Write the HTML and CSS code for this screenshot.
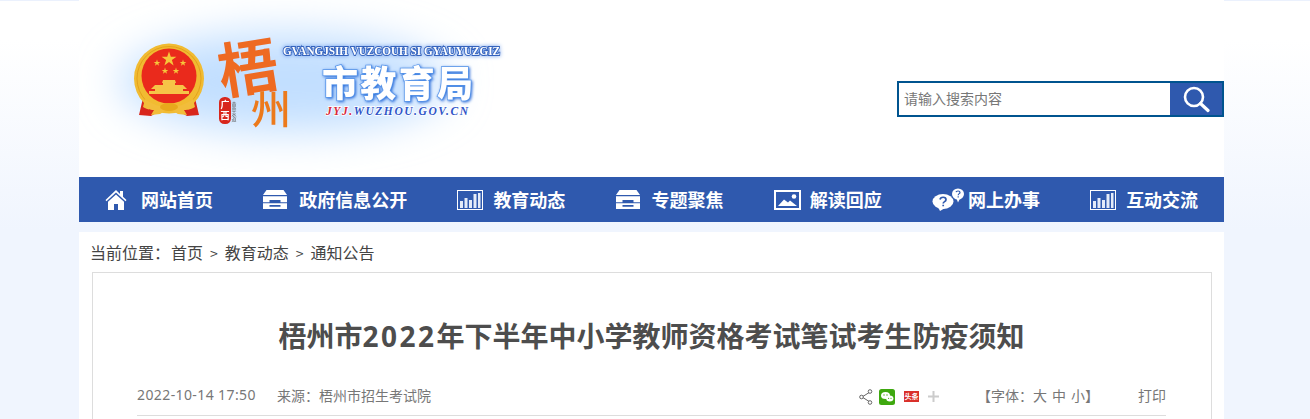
FILE: index.html
```html
<!DOCTYPE html>
<html lang="zh-CN">
<head>
<meta charset="utf-8">
<title>梧州市2022年下半年中小学教师资格考试笔试考生防疫须知</title>
<link rel="stylesheet" href="styles.css">
</head>
<body>
<div class="page">
  <header class="header">
    <svg class="logo" width="470" height="177" viewBox="0 0 470 177" aria-label="梧州市教育局">
      <defs>
        <filter id="soft" x="-20%" y="-20%" width="140%" height="140%"><feGaussianBlur stdDeviation="0.35"/></filter>
        <filter id="halo" x="-30%" y="-60%" width="160%" height="220%"><feGaussianBlur stdDeviation="21"/></filter>
      </defs>
      <ellipse cx="205" cy="82" rx="165" ry="50" fill="#c2dfff" filter="url(#halo)"/>
      <g filter="url(#soft)">
        <path d="M64 98L60 115L72 116L86 108Z M116 98L120 115L108 116L94 108Z" fill="#d8261c"/>
        <circle cx="90" cy="78.500" r="35" fill="#f1bb30"/>
        <circle cx="90" cy="78.500" r="32" fill="none" stroke="#e3a21e" stroke-width="1"/>
        <circle cx="90" cy="76" r="27.500" fill="#ea2a1e"/>
        <path d="M90 51.500l1.800 5.300h5.600l-4.500 3.300 1.700 5.300-4.600-3.300-4.600 3.300 1.700-5.300-4.500-3.300h5.600z" fill="#f6c63a"/>
        <path d="M78 59.500l.8 2.400h2.500l-2 1.500.8 2.400-2.100-1.500-2.100 1.500.8-2.400-2-1.500h2.500z" fill="#f6c63a"/>
        <path d="M104 59.500l.8 2.400h2.500l-2 1.500.8 2.400-2.100-1.500-2.100 1.500.8-2.400-2-1.500h2.500z" fill="#f6c63a"/>
        <path d="M86 67.500l.8 2.400h2.500l-2 1.500.8 2.400-2.100-1.500-2.100 1.500.8-2.400-2-1.500h2.500z" fill="#f6c63a"/>
        <path d="M97 67.500l.8 2.400h2.500l-2 1.500.8 2.400-2.100-1.500-2.100 1.500.8-2.400-2-1.500h2.500z" fill="#f6c63a"/>
        <path d="M84 80h12l1 3h-1v2h8l4 4h-4v2h6v3H70v-3h6v-2h-4l4-4h8v-2h-1z" fill="#f6c447"/>
        <path d="M66 99c7 5 15 8 24 8s17-3 24-8l2 8c-5 3-9 3-11 3l3 5-9-1-9-5-9 5-9 1 3-5c-2 0-6 0-11-3z" fill="#f2bd3a"/>
        <ellipse cx="90" cy="107" rx="9" ry="4" fill="#e8a91f"/>
      </g>
      <g filter="url(#soft)">
        <text class="wu" x="139" y="90" transform="rotate(-9 170 67)">梧</text>
        <text class="zhou" x="172" y="124">州</text>
        <rect x="140" y="97" width="12" height="27" rx="5.500" fill="#d8261c"/>
        <text class="seal" x="141.500" y="108">广</text>
        <text class="seal" x="141.500" y="119">西</text>
        <text class="vert" x="155" y="102">黄金水道</text>
      </g>
      <text class="en" x="204" y="55" textLength="217" lengthAdjust="spacingAndGlyphs">GVANGJSIH VUZCOUH SI GYAUYUZGIZ</text>
      <text class="cn" x="243" y="97" textLength="151">市教育局</text>
      <text class="url" x="247" y="115" textLength="142"><tspan class="url-red">JYJ.</tspan>WUZHOU.GOV.CN</text>
    </svg>
    <form class="search">
      <span class="search-input">请输入搜索内容</span>
      <span class="search-btn">
        <svg width="28" height="28" viewBox="0 0 28 28"><circle cx="12" cy="12" r="9" fill="none" stroke="#fff" stroke-width="2.600"/><path d="M18.500 18.500L26 25.500" stroke="#fff" stroke-width="3.200" stroke-linecap="round"/></svg>
      </span>
    </form>
  </header>

  <nav class="nav">
    <a class="nav-item"><span class="ico"><svg width="22" height="22" viewBox="0 0 22 22"><path d="M11 1L.5 11l1 1.200L11 3.500l9.500 8.700 1-1.200L18 7.700V2h-3v3z" fill="#fff"/><path d="M11 5.500L3 12.800V21h6v-6h4v6h6v-8.200z" fill="#fff"/></svg></span>网站首页</a>
    <a class="nav-item"><span class="ico"><svg width="24" height="19" viewBox="0 0 24 19" preserveAspectRatio="none"><path d="M3.500 0h17L24 5H0z" fill="#fff"/><path d="M0 6.200h24v6h-6.500v-2.200h-11v2.200H0z" fill="#fff"/><path d="M0 13.200h24V19H0zM6.500 15V16.800h11V15z" fill="#fff" fill-rule="evenodd"/></svg></span>政府信息公开</a>
    <a class="nav-item"><span class="ico"><svg width="26" height="20" viewBox="0 0 26 20"><rect x=".5" y=".5" width="25" height="19" fill="none" stroke="#fff"/><path d="M3 11h3v7H3zM7.500 8h3v10h-3zM12 10h3v8h-3zM16.500 4h3v14h-3zM21 3h2.500v15H21z" fill="#e4ebf8"/></svg></span>教育动态</a>
    <a class="nav-item"><span class="ico"><svg width="24" height="19" viewBox="0 0 24 19" preserveAspectRatio="none"><path d="M3.500 0h17L24 5H0z" fill="#fff"/><path d="M0 6.200h24v6h-6.500v-2.200h-11v2.200H0z" fill="#fff"/><path d="M0 13.200h24V19H0zM6.500 15V16.800h11V15z" fill="#fff" fill-rule="evenodd"/></svg></span>专题聚焦</a>
    <a class="nav-item"><span class="ico"><svg width="27" height="20" viewBox="0 0 27 20"><rect x="1" y="1" width="25" height="18" fill="none" stroke="#fff" stroke-width="2"/><path d="M4 16l6-6.500 4 3 2-2 7 5.500z" fill="#fff"/><circle cx="20" cy="6.500" r="2.300" fill="#fff"/></svg></span>解读回应</a>
    <a class="nav-item"><span class="ico"><svg width="33" height="23" viewBox="0 0 33 23"><ellipse cx="11" cy="13.500" rx="10.500" ry="7.500" fill="#fff"/><path d="M6 19l2 4 5-3z" fill="#fff"/><path d="M8 11.500c.5-3 6-3 6 .2 0 2-2.800 1.800-2.800 3.800M11.200 16.800v1.500" fill="none" stroke="#2f59ae" stroke-width="1.700"/><ellipse cx="26" cy="6" rx="6" ry="5.500" fill="#fff"/><path d="M24.500 10.500l1.500 4 2.500-5z" fill="#fff"/><path d="M24 4.200c.3-1.600 4-1.600 4 .2 0 1.300-1.800 1.200-1.800 2.800M26.200 8.200V9.500" fill="none" stroke="#2f59ae" stroke-width="1.200"/></svg></span>网上办事</a>
    <a class="nav-item"><span class="ico"><svg width="26" height="20" viewBox="0 0 26 20"><rect x=".5" y=".5" width="25" height="19" fill="none" stroke="#fff"/><path d="M3 11h3v7H3zM7.500 8h3v10h-3zM12 10h3v8h-3zM16.500 4h3v14h-3zM21 3h2.500v15H21z" fill="#e4ebf8"/></svg></span>互动交流</a>
  </nav>

  <main class="main">
    <div class="crumbs"><span class="here">当前位置：</span><a>首页</a><i>&gt;</i><a>教育动态</a><i>&gt;</i><a>通知公告</a></div>
    <article class="card">
      <h1 class="title">梧州市<span class="digits">2022</span>年下半年中小学教师资格考试笔试考生防疫须知</h1>
      <div class="meta">
        <span class="date">2022-10-14 17:50</span>
        <span class="source">来源：梧州市招生考试院</span>
        <span class="share">
          <svg width="14" height="16" viewBox="0 0 14 16"><path d="M11 3L3 8l8 5" fill="none" stroke="#666" stroke-width="1"/><circle cx="11" cy="2.500" r="1.800" fill="#fff" stroke="#666"/><circle cx="2.500" cy="8" r="1.800" fill="#fff" stroke="#666"/><circle cx="11" cy="13.500" r="1.800" fill="#fff" stroke="#666"/></svg>
          <svg width="16" height="16" viewBox="0 0 16 16"><rect width="16" height="16" rx="2.500" fill="#3ea80f"/><ellipse cx="6.500" cy="6.500" rx="4.500" ry="3.600" fill="#fff"/><ellipse cx="10.800" cy="9.500" rx="3.600" ry="3" fill="#fff"/><circle cx="5" cy="6" r=".7" fill="#3ea80f"/><circle cx="8" cy="6" r=".7" fill="#3ea80f"/><circle cx="9.600" cy="9.300" r=".6" fill="#3ea80f"/><circle cx="12" cy="9.300" r=".6" fill="#3ea80f"/></svg>
          <span class="toutiao">头条</span>
          <svg width="11" height="11" viewBox="0 0 11 11"><path d="M5.500 0v11M0 5.500h11" stroke="#ccc" stroke-width="2"/></svg>
        </span>
        <span class="fontsize">【字体：<a>大</a><a>中</a><a>小</a>】</span>
        <span class="print">打印</span>
      </div>
    </article>
  </main>
</div>
</body>
</html>
```
FILE: styles.css
```css
* { box-sizing: border-box; }
html, body { margin: 0; height: 100%; overflow: hidden; }
body {
  background: linear-gradient(#ebf1fd 0, #ebf1fd 1px, #ffffff 1px, #ffffff 40px, #f0f5fe 230px, #f0f5fe 100%);
  font-family: "Noto Sans CJK SC", sans-serif;
  color: #444;
}
.page { width: 1145px; margin-left: 79px; }
.header {
  height: 177px;
  background: #fff;
  display: flex;
  justify-content: space-between;
  align-items: flex-start;
}
.logo { display: block; flex: none; }
.wu { font: 700 60px "Noto Sans CJK SC", sans-serif; fill: #ee6a24; }
.zhou { font: 500 40px "Noto Sans CJK SC", sans-serif; fill: #ec7a1e; }
.seal { font: 700 9px "Noto Sans CJK SC", sans-serif; fill: #fff; }
.vert { font: 400 5px "Noto Sans CJK SC", sans-serif; fill: #555; writing-mode: vertical-rl; }
.en {
  font: 700 13px "Liberation Serif", serif;
  fill: #fff;
  stroke: #3563bd;
  stroke-width: 2px;
  paint-order: stroke;
  filter: drop-shadow(0 0 2px #6f9cea);
}
.cn {
  font: 900 36px "Noto Sans CJK SC", sans-serif;
  fill: #fff;
  stroke: #5a97ea;
  stroke-width: 1.500px;
  paint-order: stroke;
  filter: drop-shadow(1px 1px 1.500px #2468d8);
}
.url {
  font: italic 700 11.500px "Liberation Serif", serif;
  fill: #2f55c8;
  stroke: #fff;
  stroke-width: 1.500px;
  paint-order: stroke;
}
.url-red { fill: #d8283a; }

.search {
  margin-top: 81px;
  width: 327px;
  height: 36px;
  border: 2px solid #00548f;
  display: flex;
  background: #fff;
}
.search-input {
  flex: 1;
  padding-left: 5px;
  font: 14px/30px "Noto Sans CJK SC", sans-serif;
  color: #777;
}
.search-btn {
  width: 52px;
  background: #2f59ae;
  display: flex;
  align-items: center;
  justify-content: center;
}

.nav {
  height: 45px;
  background: #2f59ae;
  display: flex;
  align-items: center;
  gap: 50.2px;
  padding-left: 26px;
}
.nav-item {
  display: flex;
  align-items: center;
  color: #fff;
  font: 700 18px/45px "Noto Sans CJK SC", sans-serif;
  white-space: nowrap;
}
.ico { display: flex; width: 36px; flex: none; align-items: center; }

.main {
  margin-top: 10px;
  background: #fff;
  padding: 0 12px 0 13px;
  height: 300px;
}
.crumbs {
  height: 40px;
  padding-top: 8px;
  margin-left: -2px;
  font: 16px/24px "Noto Sans CJK SC", sans-serif;
  color: #444;
}
.here { margin-right: 1px; }
.crumbs i { font-style: normal; margin: 0 7px; font-size: 14px; }
.card {
  border: 1px solid #ddd;
  height: 260px;
  padding: 0 45px 0 44px;
}
.title {
  margin: 44px 0 0;
  text-align: center;
  font: 700 28px/36px "Noto Sans CJK SC", sans-serif;
  color: #4d4d4d;
}
.digits { font-family: "Noto Sans", sans-serif; letter-spacing: 2.500px; }
.meta {
  margin-top: 25px;
  height: 37px;
  border-bottom: 1px solid #ddd;
  display: flex;
  align-items: center;
  padding-bottom: 5px;
  font: 14px/20px "Noto Sans CJK SC", sans-serif;
  color: #777;
}
.date { font-family: "Noto Sans", sans-serif; letter-spacing: .4px; width: 140px; }
.source { flex: 1; }
.share { display: flex; align-items: center; gap: 6px; width: 118px; margin-top: 4px; }
.toutiao {
  width: 15px; height: 11px;
  background: #d9302a;
  color: #fff;
  font: 700 7px/11px "Noto Sans CJK SC", sans-serif;
  text-align: center;
  margin: 0 3px 0 3px;
}
.fontsize { width: 161px; }
.fontsize a { margin-right: 5px; }
.fontsize a:last-of-type { margin-right: 0; }
.print { width: 28px; }
```
